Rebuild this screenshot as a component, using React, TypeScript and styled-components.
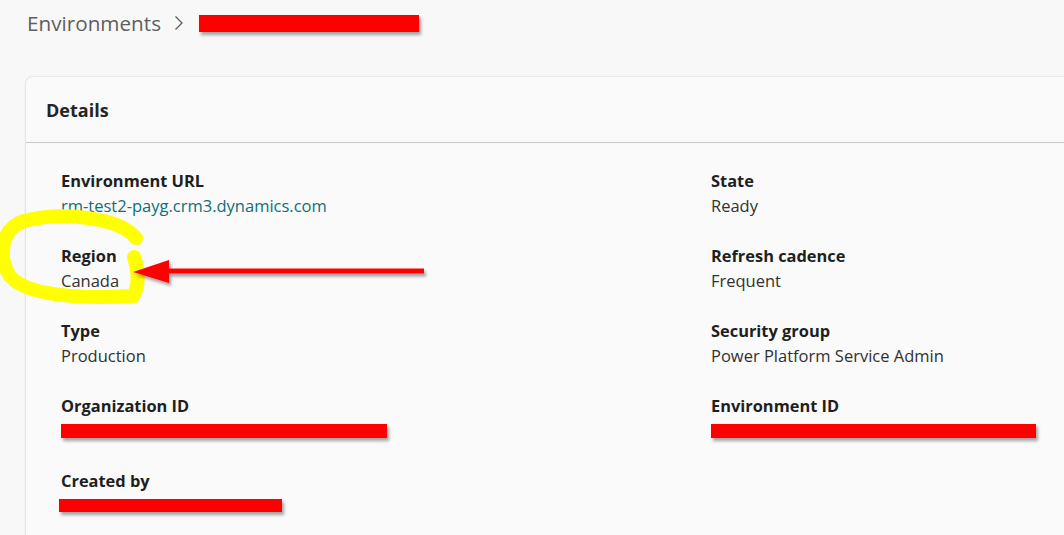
import React from "react";
import styled, { createGlobalStyle } from "styled-components";

const Global = createGlobalStyle`
  html, body { margin: 0; padding: 0; background: #f8f8f8; overflow: hidden; }
  body { font-family: "Open Sans", "Noto Sans", sans-serif; color: #201f1e; }
`;

const Page = styled.div`
  position: relative;
  width: 1064px;
  height: 535px;
  overflow: hidden;
`;

const Breadcrumb = styled.div`
  display: flex;
  align-items: center;
  height: 46px;
  padding-left: 27px;
  font-size: 20.7px;
  color: #605e5c;
`;

const Chevron = styled.span`
  margin: 0 15px 0 13px;
  display: inline-flex;
`;

const Redact = styled.div<{ $w: number; $h: number }>`
  width: ${(p) => p.$w}px;
  height: ${(p) => p.$h}px;
  background: #ff0000;
  box-shadow: 2px 3px 3px rgba(0, 0, 0, 0.35);
`;

const Card = styled.section`
  margin: 31px 0 0 26px;
  width: 1100px;
  background: #fafafa;
  border-radius: 6px 0 0 0;
  box-shadow: 0 0 2px rgba(0, 0, 0, 0.18), 0 1px 3px rgba(0, 0, 0, 0.08);
`;

const CardHeader = styled.header`
  height: 65px;
  display: flex;
  align-items: center;
  padding-left: 20px;
  border-bottom: 1px solid #c8c8c8;
  font-size: 18px;
  font-weight: 700;
  color: #252423;
`;

const Grid = styled.div`
  display: grid;
  grid-template-columns: 650px 1fr;
  row-gap: 25px;
  padding: 25px 0 40px 35px;
`;

const Field = styled.div`
  display: flex;
  flex-direction: column;
`;

const Label = styled.div`
  font-size: 16.4px;
  font-weight: 700;
  line-height: 25px;
  color: #201f1e;
`;

const Value = styled.div<{ $link?: boolean }>`
  font-size: 16.5px;
  line-height: 25px;
  height: 25px;
  display: flex;
  align-items: center;
  color: ${(p) => (p.$link ? "#0e6f77" : "#323130")};
`;

const Overlay = styled.svg`
  position: absolute;
  left: 0;
  top: 0;
  pointer-events: none;
`;

const fields: { label: string; value?: string; link?: boolean; redact?: [number, number, number] }[] = [
  { label: "Environment URL", value: "rm-test2-payg.crm3.dynamics.com", link: true },
  { label: "State", value: "Ready" },
  { label: "Region", value: "Canada" },
  { label: "Refresh cadence", value: "Frequent" },
  { label: "Type", value: "Production" },
  { label: "Security group", value: "Power Platform Service Admin" },
  { label: "Organization ID", redact: [326, 14, 0] },
  { label: "Environment ID", redact: [325, 14, 0] },
  { label: "Created by", redact: [223, 13, -2] },
];

export default function App() {
  return (
    <Page>
      <Global />
      <Breadcrumb>
        Environments
        <Chevron>
          <svg width="10" height="16" viewBox="0 0 10 16">
            <path d="M1.5 1.5 L8 8 L1.5 14.5" fill="none" stroke="#605e5c" strokeWidth="1.3" />
          </svg>
        </Chevron>
        <Redact $w={220} $h={17} />
      </Breadcrumb>
      <Card>
        <CardHeader>Details</CardHeader>
        <Grid>
          {fields.map((f) => (
            <Field key={f.label}>
              <Label>{f.label}</Label>
              <Value $link={f.link}>
                {f.redact ? (
                  <Redact $w={f.redact[0]} $h={f.redact[1]} style={{ marginLeft: f.redact[2] }} />
                ) : (
                  f.value
                )}
              </Value>
            </Field>
          ))}
        </Grid>
      </Card>
      <Overlay width="1064" height="535" viewBox="0 0 1064 535">
        <defs>
          <filter id="sh" x="-10%" y="-50%" width="120%" height="200%">
            <feDropShadow dx="2" dy="3" stdDeviation="1.5" floodColor="#000" floodOpacity="0.35" />
          </filter>
        </defs>
        <path
          d="M136 238 C 118 216, 60 212, 24 221 C 0 229, -2 258, 10 276 C 26 296, 82 299, 133 296 C 140 285, 138 268, 134 257"
          fill="none"
          stroke="#ffff00"
          strokeWidth="14"
          strokeLinecap="round"
        />
        <g filter="url(#sh)">
          <rect x="166" y="268.5" width="258" height="5" fill="#ff0000" />
          <polygon points="133,272 169,260 169,283" fill="#ff0000" />
        </g>
      </Overlay>
    </Page>
  );
}
